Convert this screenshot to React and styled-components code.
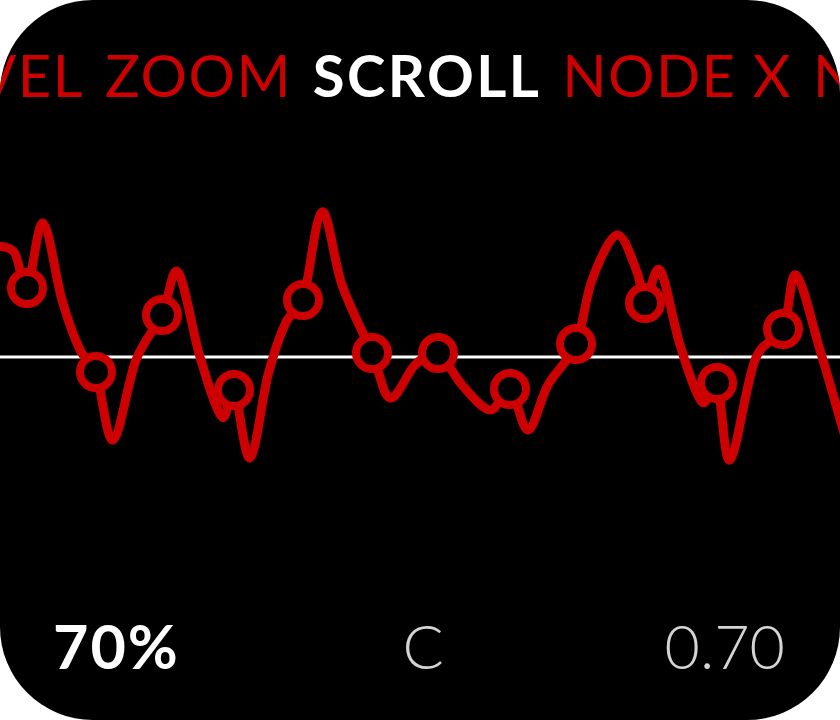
import styled, { createGlobalStyle } from "styled-components";

const Global = createGlobalStyle`
  html, body {
    margin: 0;
    padding: 0;
    background: #ffffff;
  }
  body {
    font-family: Lato, "Noto Sans", sans-serif;
  }
`;

const RED = "#cc0000";

const Screen = styled.div`
  width: 840px;
  height: 720px;
  background: #000000;
  border-radius: 93px;
  overflow: hidden;
  display: flex;
  flex-direction: column;
`;

const Menu = styled.div`
  height: 150px;
  box-sizing: border-box;
  padding: 46px 0 0 14px;
  display: grid;
  grid-template-columns: minmax(0, 1fr) auto minmax(0, 1fr);
  column-gap: 21px;
  font-size: 58px;
  line-height: 58px;
  white-space: nowrap;
`;

const Side = styled.div`
  display: flex;
  gap: 21px;
  justify-content: ${(p) => (p.$align === "end" ? "flex-end" : "flex-start")};
`;

const Item = styled.span`
  color: ${(p) => (p.$active ? "#ffffff" : RED)};
  font-weight: ${(p) => (p.$active ? 700 : 400)};
  letter-spacing: ${(p) => (p.$active ? "2.4px" : "1.5px")};
`;

const Chart = styled.svg`
  flex: 1;
  display: block;
  width: 840px;
  overflow: visible;
`;

const Footer = styled.div`
  height: 140px;
  box-sizing: border-box;
  padding: 35px 55px 0 53px;
  display: grid;
  grid-template-columns: 1fr auto 1fr;
  font-size: 61px;
  line-height: 61px;
`;

const Value = styled.span`
  justify-self: ${(p) => p.$justify || "center"};
  color: ${(p) => (p.$strong ? "#ffffff" : "#d4d4d4")};
  font-weight: ${(p) => (p.$strong ? 700 : 300)};
  letter-spacing: ${(p) => (p.$strong ? "2px" : "0")};
  margin-left: ${(p) => (p.$justify ? "0" : "8px")};
`;

const curve = [
  [-8, 246], [14, 252], [27, 288],
  [43, 223],
  [62, 300], [80, 350], [96, 372],
  [113, 440],
  [136, 360], [162, 315],
  [178, 272],
  [200, 357], [222, 417], [234, 390],
  [250, 458],
  [268, 375], [286, 322], [303, 300],
  [322, 212],
  [342, 285], [372, 353],
  [390, 398],
  [415, 365], [438, 353],
  [462, 385], [490, 410], [510, 389],
  [528, 430],
  [548, 385], [576, 344],
  [592, 280], [617, 235], [637, 272], [645, 303],
  [660, 270],
  [680, 345], [702, 402], [717, 383],
  [730, 460],
  [755, 360], [783, 329],
  [796, 275],
  [820, 350], [846, 440],
];

const nodes = [
  [27, 288], [96, 372], [162, 315], [234, 390], [303, 300], [372, 353],
  [438, 353], [510, 389], [576, 344], [645, 303], [717, 383], [783, 329],
];

function smoothPath(pts, t = 1) {
  let d = `M${pts[0][0]},${pts[0][1]}`;
  for (let i = 0; i < pts.length - 1; i++) {
    const p0 = pts[i - 1] || pts[i];
    const p1 = pts[i];
    const p2 = pts[i + 1];
    const p3 = pts[i + 2] || p2;
    const c1x = p1[0] + ((p2[0] - p0[0]) / 6) * t;
    const c1y = p1[1] + ((p2[1] - p0[1]) / 6) * t;
    const c2x = p2[0] - ((p3[0] - p1[0]) / 6) * t;
    const c2y = p2[1] - ((p3[1] - p1[1]) / 6) * t;
    d += ` C${c1x.toFixed(1)},${c1y.toFixed(1)} ${c2x.toFixed(1)},${c2y.toFixed(1)} ${p2[0]},${p2[1]}`;
  }
  return d;
}

const App = () => {
  return (
    <>
      <Global />
      <Screen>
        <Menu>
          <Side $align="end">
            <Item>LEVEL</Item>
            <Item>ZOOM</Item>
          </Side>
          <Item $active>SCROLL</Item>
          <Side>
            <Item>NODE X</Item>
            <Item>NODE Y</Item>
          </Side>
        </Menu>
        <Chart viewBox="0 150 840 430" preserveAspectRatio="none">
          <line x1="0" y1="357" x2="840" y2="357" stroke="#ffffff" strokeWidth="3" />
          <path
            d={smoothPath(curve)}
            fill="none"
            stroke={RED}
            strokeWidth="9"
            strokeLinecap="round"
            strokeLinejoin="round"
          />
          {nodes.map(([x, y]) => (
            <circle key={x} cx={x} cy={y} r="16" fill="#000000" stroke={RED} strokeWidth="8" />
          ))}
        </Chart>
        <Footer>
          <Value $justify="start" $strong>70%</Value>
          <Value>C</Value>
          <Value $justify="end">0.70</Value>
        </Footer>
      </Screen>
    </>
  );
};

export default App;
